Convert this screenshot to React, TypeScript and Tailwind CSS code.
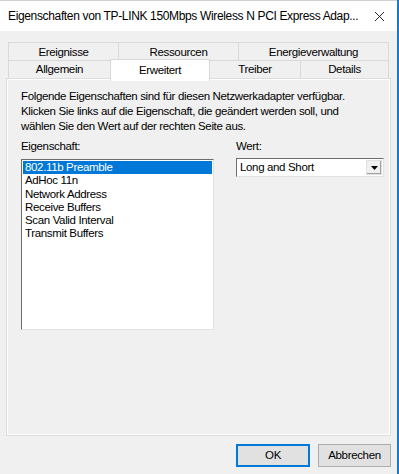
import { X } from "lucide-react";

const row1 = [
  { label: "Ereignisse", w: "w-[110px]" },
  { label: "Ressourcen", w: "w-[120px]" },
  { label: "Energieverwaltung", w: "w-[151px]" },
];

const items = [
  "802.11b Preamble",
  "AdHoc 11n",
  "Network Address",
  "Receive Buffers",
  "Scan Valid Interval",
  "Transmit Buffers",
];

export default function App() {
  return (
    <div
      className="w-[399px] h-[474px] bg-[#f0f0f0] border-r-2 border-[#1a79d1] text-[11.5px] tracking-[-0.35px] text-black overflow-hidden"
      style={{ fontFamily: '"Liberation Sans", Arial, sans-serif' }}
    >
      {/* Titelleiste */}
      <div className="h-[31px] bg-white flex items-center justify-between pl-[8px] pr-[9px] border-t border-[#d0d0d0]">
        <span className="text-[12px] tracking-[-0.35px] whitespace-nowrap">
          Eigenschaften von TP-LINK 150Mbps Wireless N PCI Express Adap...
        </span>
        <X size={17} strokeWidth={1.2} className="text-black shrink-0" />
      </div>

      {/* Reiter */}
      <div className="ml-[8px] mt-[11px] w-[381px]">
        <div className="flex h-[18px]">
          {row1.map((t) => (
            <div
              key={t.label}
              className={`${t.w} flex items-center justify-center border-t border-l border-[#d9d9d9] last:border-r pt-[2px]`}
            >
              {t.label}
            </div>
          ))}
        </div>
        <div className="flex h-[18px] items-end relative z-10">
          <div className="w-[102px] h-[18px] flex items-center justify-center border-t border-l border-[#d9d9d9]">
            Allgemein
          </div>
          <div className="w-[100px] h-[22px] -mb-[3px] -mt-[2px] flex items-start pt-[2px] justify-center bg-white border-t border-l border-r border-[#d9d9d9]">
            Erweitert
          </div>
          <div className="w-[90px] h-[18px] flex items-center justify-center border-t border-[#d9d9d9]">
            Treiber
          </div>
          <div className="w-[89px] h-[18px] flex items-center justify-center border-t border-l border-r border-[#d9d9d9]">
            Details
          </div>
        </div>
      </div>

      {/* Registerseite */}
      <div className="ml-[7px] mt-[1px] w-[383px] h-[356px] border border-white shadow-[0_0_0_1px_#dcdcdc] pl-[13px] pr-[4px] pt-[9px]">
        <p className="leading-[15px]">
          Folgende Eigenschaften sind für diesen Netzwerkadapter verfügbar.
          <br />
          Klicken Sie links auf die Eigenschaft, die geändert werden soll, und
          <br />
          wählen Sie den Wert auf der rechten Seite aus.
        </p>

        <div className="flex mt-[5px]">
          <div className="w-[193px] shrink-0">
            <div className="leading-[14px] mb-[6px]">Eigenschaft:</div>
            <div className="h-[171px] bg-white border-t border-l border-t-[#6d6d6d] border-l-[#6d6d6d] border-r border-b border-r-[#e3e3e3] border-b-[#e3e3e3] p-[1px]">
              {items.map((it, i) => (
                <div
                  key={it}
                  className={`h-[13.3px] leading-[13.3px] pl-[2px] ${
                    i === 0 ? "bg-[#0078d7] text-white" : ""
                  }`}
                >
                  {it}
                </div>
              ))}
            </div>
          </div>

          <div className="ml-[22px] w-[148px] shrink-0">
            <div className="leading-[14px] mb-[5px]">Wert:</div>
            <div className="h-[19px] bg-white border border-t-[#6d6d6d] border-l-[#6d6d6d] border-r-[#e3e3e3] border-b-[#e3e3e3] flex items-center justify-between pl-[3px] pr-[1px]">
              <span>Long and Short</span>
              <div className="w-[16px] h-[15px] bg-[#f0f0f0] border border-[#e0e0e0] shadow-[inset_-1px_-1px_0_#a0a0a0] flex items-center justify-center">
                <svg width="7" height="4" viewBox="0 0 7 4">
                  <path d="M0 0h7L3.5 4z" fill="#000" />
                </svg>
              </div>
            </div>
          </div>
        </div>
      </div>

      {/* Schaltflächen */}
      <div className="flex justify-end gap-[8px] pr-[6px] mt-[9px]">
        <button className="w-[74px] h-[23px] bg-[#e1e1e1] border-2 border-[#0078d7]">
          OK
        </button>
        <button className="w-[73px] h-[23px] bg-[#e1e1e1] border border-[#adadad]">
          Abbrechen
        </button>
      </div>
    </div>
  );
}
